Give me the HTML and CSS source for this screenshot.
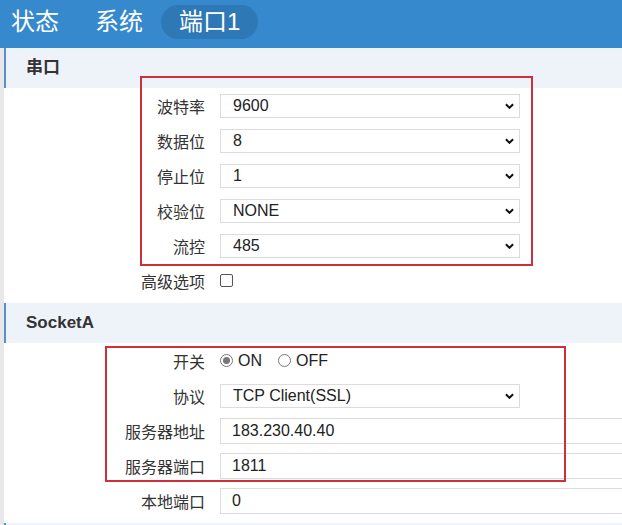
FILE: index.html
```html
<!DOCTYPE html>
<html lang="zh-CN">
<head>
<meta charset="utf-8">
<title>端口1</title>
<link rel="stylesheet" href="styles.css">
</head>
<body>
<header class="topbar">
  <nav class="tabs">
    <span class="tab tab-first">状态</span>
    <span class="tab">系统</span>
    <span class="tab tab-active">端口1</span>
  </nav>
</header>
<main class="page">
  <section class="section">
    <h2 class="section-title">串口</h2>
    <div class="rows">
      <div class="row"><label class="label">波特率</label><div class="select-wrap"><select class="select"><option>9600</option></select><svg class="chev" viewBox="0 0 10 6" width="9" height="6"><path d="M1 1L5 5L9 1" fill="none" stroke="#111" stroke-width="2.2"/></svg></div></div>
      <div class="row"><label class="label">数据位</label><div class="select-wrap"><select class="select"><option>8</option></select><svg class="chev" viewBox="0 0 10 6" width="9" height="6"><path d="M1 1L5 5L9 1" fill="none" stroke="#111" stroke-width="2.2"/></svg></div></div>
      <div class="row"><label class="label">停止位</label><div class="select-wrap"><select class="select"><option>1</option></select><svg class="chev" viewBox="0 0 10 6" width="9" height="6"><path d="M1 1L5 5L9 1" fill="none" stroke="#111" stroke-width="2.2"/></svg></div></div>
      <div class="row"><label class="label">校验位</label><div class="select-wrap"><select class="select"><option>NONE</option></select><svg class="chev" viewBox="0 0 10 6" width="9" height="6"><path d="M1 1L5 5L9 1" fill="none" stroke="#111" stroke-width="2.2"/></svg></div></div>
      <div class="row"><label class="label">流控</label><div class="select-wrap"><select class="select"><option>485</option></select><svg class="chev" viewBox="0 0 10 6" width="9" height="6"><path d="M1 1L5 5L9 1" fill="none" stroke="#111" stroke-width="2.2"/></svg></div></div>
      <div class="row"><label class="label">高级选项</label><div class="field"><input class="checkbox" type="checkbox"></div></div>
      <div class="mark mark-serial"></div>
    </div>
  </section>
  <section class="section">
    <h2 class="section-title">SocketA</h2>
    <div class="rows">
      <div class="row"><label class="label">开关</label>
        <div class="field radios">
          <span class="radio-item"><input class="radio" type="radio" name="sw" checked><span class="radio-text">ON</span></span>
          <span class="radio-item"><input class="radio" type="radio" name="sw"><span class="radio-text">OFF</span></span>
        </div>
      </div>
      <div class="row"><label class="label">协议</label><div class="select-wrap"><select class="select"><option>TCP Client(SSL)</option></select><svg class="chev" viewBox="0 0 10 6" width="9" height="6"><path d="M1 1L5 5L9 1" fill="none" stroke="#111" stroke-width="2.2"/></svg></div></div>
      <div class="row"><label class="label">服务器地址</label><input class="input" type="text" value="183.230.40.40"></div>
      <div class="row"><label class="label">服务器端口</label><input class="input" type="text" value="1811"></div>
      <div class="row"><label class="label">本地端口</label><input class="input" type="text" value="0"></div>
      <div class="mark mark-socket"></div>
    </div>
  </section>
  <section class="section section-last">
    <h2 class="section-title"></h2>
  </section>
</main>
</body>
</html>
```
FILE: styles.css
```css
* { box-sizing: border-box; }
html, body { margin: 0; padding: 0; }
body {
  background: #ffffff;
  font-family: "Liberation Sans", "Noto Sans CJK SC", Arial, sans-serif;
  color: #333;
  height: 525px;
  overflow: hidden;
}
.topbar {
  height: 48px;
  background: #3589cc;
  display: flex;
  align-items: center;
}
.tabs { display: flex; align-items: center; }
.tab {
  color: #fff;
  font-size: 24px;
  line-height: 34px;
  height: 34px;
  padding: 0 18px;
  border-radius: 17px;
  margin-top: -4px;
}
.tab-first { padding-left: 11px; }
.tab-active { background: #2e78b6; }
.page {
  border-left: 4px solid #e8e8e8;
  height: 477px;
  overflow: hidden;
}
.section { padding-bottom: 5px; }
.section-title {
  margin: 0;
  height: 40px;
  line-height: 40px;
  background: #eef2f9;
  border-left: 2px solid #5b8ecb;
  padding-left: 20px;
  font-size: 17px;
  font-weight: bold;
  color: #333;
}
.rows { position: relative; }
.row {
  display: grid;
  grid-template-columns: 201px auto;
  column-gap: 15px;
  align-items: center;
  height: 35px;
}
.label {
  text-align: right;
  font-size: 16px;
  color: #333;
}
.select-wrap {
  position: relative;
  width: 300px;
  height: 24px;
}
.select {
  appearance: none;
  -webkit-appearance: none;
  width: 300px;
  height: 24px;
  border: 1px solid #dcdcdc;
  background: #fff;
  border-radius: 0;
  padding: 0 0 0 12px;
  font-family: "Liberation Sans", Arial, sans-serif;
  font-size: 16px;
  color: #222;
  outline: none;
}
.chev {
  position: absolute;
  right: 6px;
  top: 9px;
}
.input {
  width: 420px;
  height: 26px;
  border: 1px solid #dcdcdc;
  padding: 0 0 0 11px;
  font-family: "Liberation Sans", Arial, sans-serif;
  font-size: 16px;
  color: #222;
  outline: none;
  background: #fff;
}
.field { display: flex; align-items: center; height: 24px; }
.checkbox {
  appearance: none;
  -webkit-appearance: none;
  width: 13px;
  height: 13px;
  margin: 0;
  border: 1px solid #555;
  border-radius: 2px;
  background: #fff;
}
.radios { gap: 16px; }
.radio-item { display: flex; align-items: center; gap: 5px; }
.radio {
  appearance: none;
  -webkit-appearance: none;
  width: 13px;
  height: 13px;
  margin: 0;
  border: 1px solid #777;
  border-radius: 50%;
  background: #fff;
  position: relative;
}
.radio:checked::after {
  content: "";
  position: absolute;
  left: 2px;
  top: 2px;
  width: 7px;
  height: 7px;
  border-radius: 50%;
  background: #777;
}
.radio-text { font-size: 16px; color: #222; }
.mark {
  position: absolute;
  border: 2px solid #cf2f3b;
  pointer-events: none;
}
.mark-serial { left: 136px; top: -12px; width: 393px; height: 190px; }
.mark-socket { left: 101px; top: 3px; width: 461px; height: 136px; }
```
